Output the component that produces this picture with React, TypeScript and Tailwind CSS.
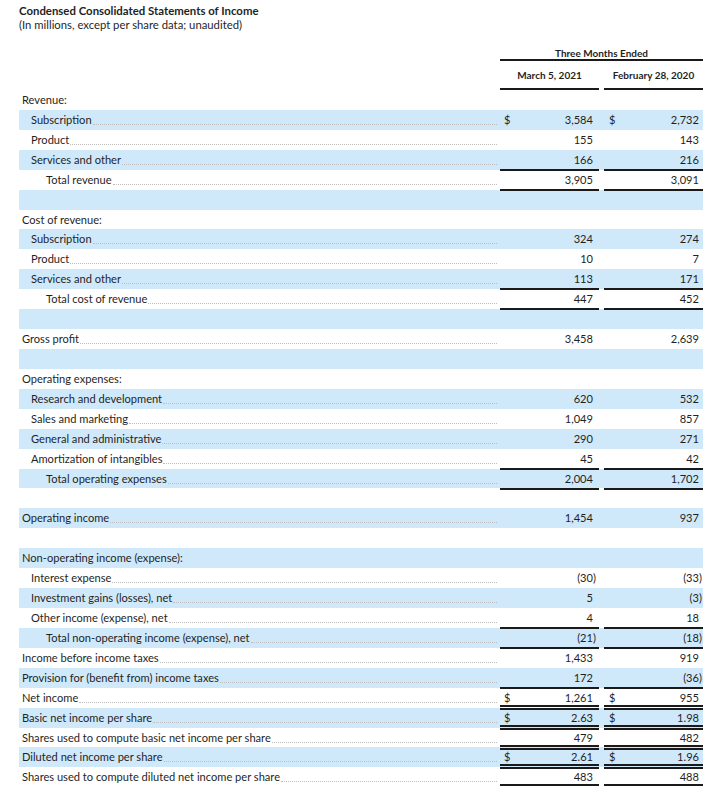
type Row = {
  label?: string;
  indent?: 0 | 1 | 2;
  header?: boolean;
  a?: string;
  b?: string;
  dollar?: boolean;
  line?: "single" | "double";
};

const rows: Row[] = [
  { label: "Revenue:", header: true },
  { label: "Subscription", indent: 1, a: "3,584", b: "2,732", dollar: true },
  { label: "Product", indent: 1, a: "155", b: "143" },
  { label: "Services and other", indent: 1, a: "166", b: "216", line: "single" },
  { label: "Total revenue", indent: 2, a: "3,905", b: "3,091", line: "single" },
  {},
  { label: "Cost of revenue:", header: true },
  { label: "Subscription", indent: 1, a: "324", b: "274" },
  { label: "Product", indent: 1, a: "10", b: "7" },
  { label: "Services and other", indent: 1, a: "113", b: "171", line: "single" },
  { label: "Total cost of revenue", indent: 2, a: "447", b: "452", line: "single" },
  {},
  { label: "Gross profit", a: "3,458", b: "2,639" },
  {},
  { label: "Operating expenses:", header: true },
  { label: "Research and development", indent: 1, a: "620", b: "532" },
  { label: "Sales and marketing", indent: 1, a: "1,049", b: "857" },
  { label: "General and administrative", indent: 1, a: "290", b: "271" },
  { label: "Amortization of intangibles", indent: 1, a: "45", b: "42", line: "single" },
  { label: "Total operating expenses", indent: 2, a: "2,004", b: "1,702", line: "single" },
  {},
  { label: "Operating income", a: "1,454", b: "937" },
  {},
  { label: "Non-operating income (expense):", header: true },
  { label: "Interest expense", indent: 1, a: "(30)", b: "(33)" },
  { label: "Investment gains (losses), net", indent: 1, a: "5", b: "(3)" },
  { label: "Other income (expense), net", indent: 1, a: "4", b: "18", line: "single" },
  { label: "Total non-operating income (expense), net", indent: 2, a: "(21)", b: "(18)", line: "single" },
  { label: "Income before income taxes", a: "1,433", b: "919" },
  { label: "Provision for (benefit from) income taxes", a: "172", b: "(36)", line: "single" },
  { label: "Net income", a: "1,261", b: "955", dollar: true, line: "double" },
  { label: "Basic net income per share", a: "2.63", b: "1.98", dollar: true, line: "double" },
  { label: "Shares used to compute basic net income per share", a: "479", b: "482", line: "double" },
  { label: "Diluted net income per share", a: "2.61", b: "1.96", dollar: true, line: "double" },
  { label: "Shares used to compute diluted net income per share", a: "483", b: "488", line: "double" },
];

const indentClass = ["pl-[3px]", "pl-[12px]", "pl-[27px]"];

function Amount({ value, dollar, line, first }: { value?: string; dollar?: boolean; line?: Row["line"]; first: boolean }) {
  const neg = value?.startsWith("(");
  const digits = neg ? value!.slice(0, -1) : value;
  const border =
    line === "single"
      ? "h-[21px] border-b-2 border-[#1a1a1a]"
      : line === "double"
      ? "h-[22px] border-b-[5px] border-double border-[#1a1a1a]"
      : "h-full";
  return (
    <div className={`w-[99px] shrink-0 flex leading-[20px] ${border} ${first ? "pl-[4px] pr-[2px]" : "pl-[5px]"}`}>
      <span className="w-[10px]">{dollar ? "$" : ""}</span>
      <span className="flex-1 text-right">{digits}</span>
      <span className="w-[4px]">{neg ? ")" : ""}</span>
    </div>
  );
}

export default function App() {
  return (
    <div className="bg-white text-[#1f1f1f] pl-[19px] pr-[18px] pt-[4px] font-['Lato','Liberation_Sans',sans-serif] text-[11.1px]">
      <div className="font-bold leading-[14px] text-[11.4px]">Condensed Consolidated Statements of Income</div>
      <div className="leading-[14px] text-[11.3px]">(In millions, except per share data; unaudited)</div>

      <div className="flex mt-[12px]">
        <div className="flex-1" />
        <div className="w-[203px] font-bold text-[10px]">
          <div className="h-[17px] leading-[18px] text-center border-b-2 border-[#1a1a1a]">Three Months Ended</div>
          <div className="flex gap-[5px]">
            <div className="w-[99px] h-[29px] leading-[28px] text-center border-b-2 border-[#1a1a1a]">March 5, 2021</div>
            <div className="w-[99px] h-[29px] leading-[28px] text-center border-b-2 border-[#1a1a1a]">February 28, 2020</div>
          </div>
        </div>
      </div>

      <div>
        {rows.map((r, i) => (
          <div key={i} className={`flex h-[19.93px] ${i % 2 === 1 ? "bg-[#cfe9fb]" : ""}`}>
            <div className={`flex-1 flex leading-[20px] pr-[3px] ${indentClass[r.indent ?? 0]}`}>
              {r.label && <span className="whitespace-nowrap">{r.label}</span>}
              {r.label && !r.header && (
                <span className="flex-1 self-start mt-[14px] ml-[1px] border-b border-dotted border-[#bdbdbd]" />
              )}
            </div>
            <div className="flex gap-[5px] items-start">
              {r.a !== undefined ? (
                <>
                  <Amount value={r.a} dollar={r.dollar} line={r.line} first />
                  <Amount value={r.b} dollar={r.dollar} line={r.line} first={false} />
                </>
              ) : (
                <>
                  <div className="w-[99px]" />
                  <div className="w-[99px]" />
                </>
              )}
            </div>
          </div>
        ))}
      </div>
    </div>
  );
}
